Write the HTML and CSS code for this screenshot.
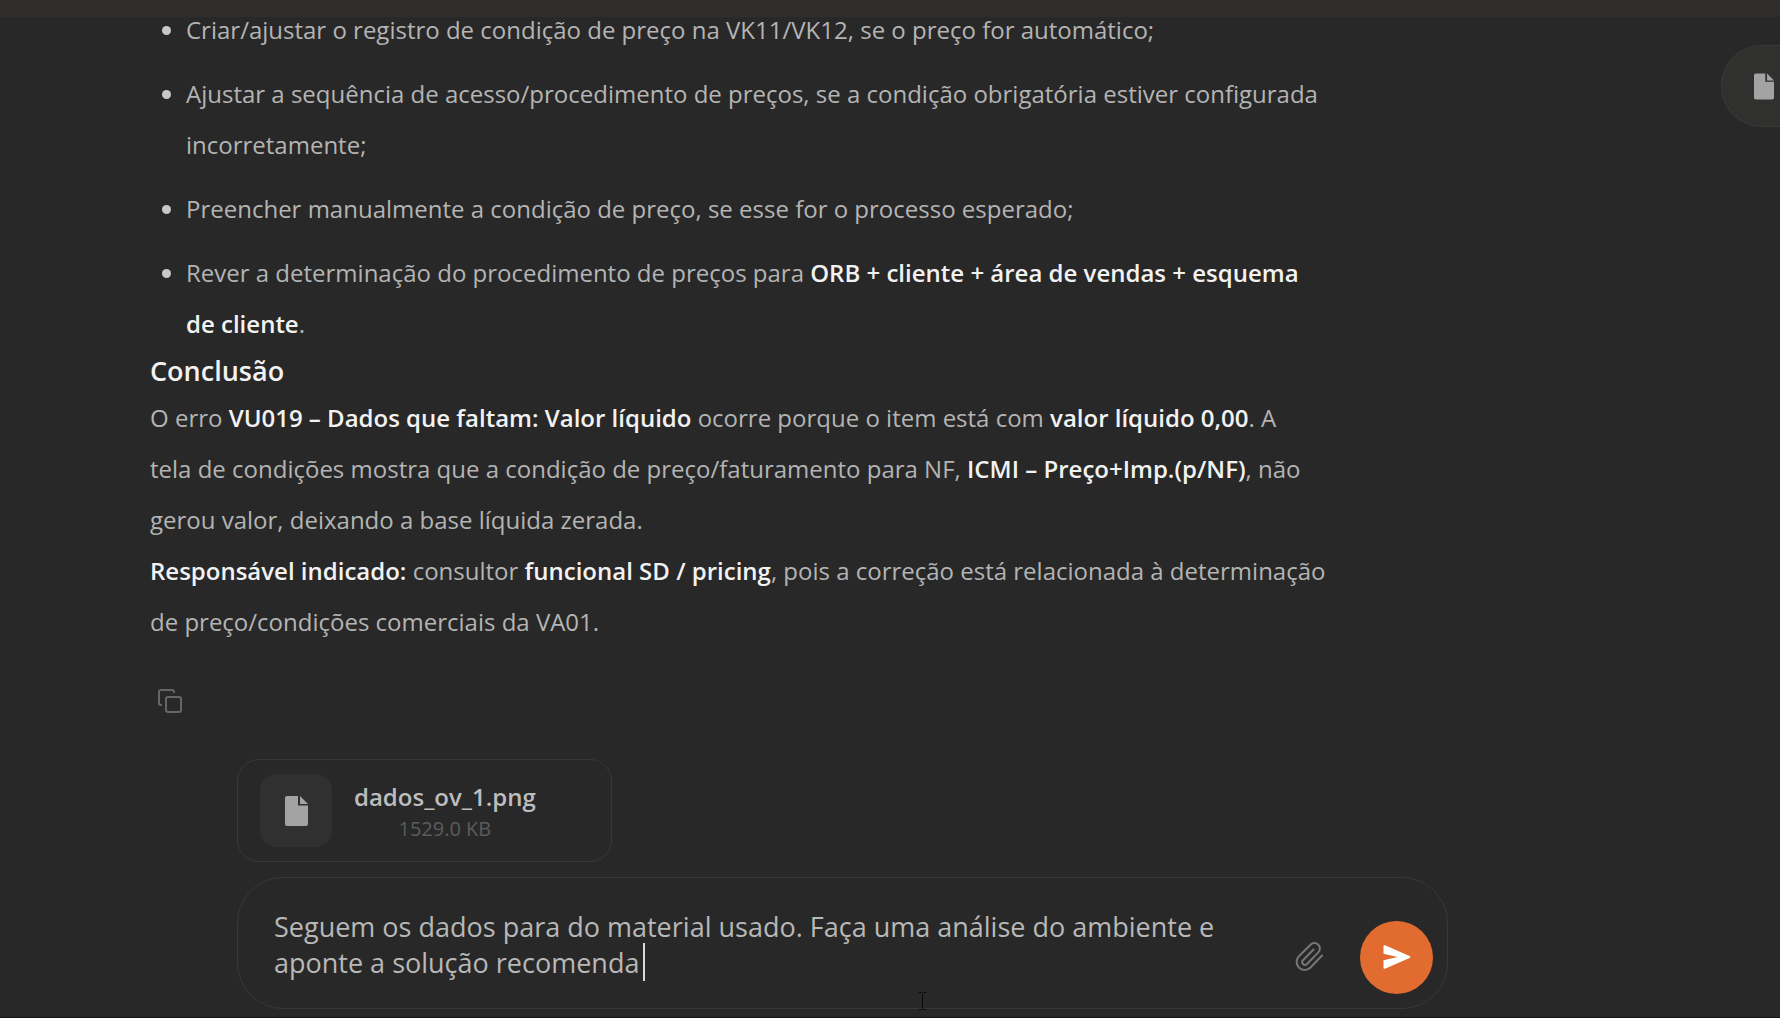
FILE: index.html
```html
<!DOCTYPE html>
<html lang="pt-BR">
<head>
  <meta charset="UTF-8" />
  <meta name="viewport" content="width=device-width, initial-scale=1.0" />
  <title>Chat</title>
  <link rel="stylesheet" href="styles.css">
</head>
<body>
  <header class="topbar"></header>

  <button class="files-btn" aria-label="Arquivos">
    <svg class="doc-icon" viewBox="0 0 23 30"><path d="M2 0H13V9.500H23V28a2 2 0 0 1-2 2H2a2 2 0 0 1-2-2V2a2 2 0 0 1 2-2z"/><path d="M15 0L23 8H15z"/></svg>
  </button>

  <main class="chat">
    <article class="message">
      <ul>
        <li>Criar/ajustar o registro de condição de preço na VK11/VK12, se o preço for automático;</li>
        <li>Ajustar a sequência de acesso/procedimento de preços, se a condição obrigatória estiver configurada incorretamente;</li>
        <li>Preencher manualmente a condição de preço, se esse for o processo esperado;</li>
        <li>Rever a determinação do procedimento de preços para <strong>ORB + cliente + área de vendas + esquema de cliente</strong>.</li>
      </ul>
      <h3>Conclusão</h3>
      <p>O erro <strong>VU019 – Dados que faltam: Valor líquido</strong> ocorre porque o item está com <strong>valor líquido 0,00</strong>. A<br>tela de condições mostra que a condição de preço/faturamento para NF, <strong>ICMI – Preço+Imp.(p/NF)</strong>, não gerou valor, deixando a base líquida zerada.</p>
      <p><strong>Responsável indicado:</strong> consultor <strong>funcional SD / pricing</strong>, pois a correção está relacionada à determinação de preço/condições comerciais da VA01.</p>
      <button class="copy-btn" aria-label="Copiar">
        <svg viewBox="0 0 24 24"><rect x="8" y="8" width="15" height="15" rx="2"/><path d="M4 16H3a2 2 0 0 1-2-2V3a2 2 0 0 1 2-2h11a2 2 0 0 1 2 2v1"/></svg>
      </button>
    </article>

    <form class="composer" onsubmit="return false;">
      <div class="file-card">
        <div class="file-thumb">
          <svg class="doc-icon" viewBox="0 0 23 30"><path d="M2 0H13V9.500H23V28a2 2 0 0 1-2 2H2a2 2 0 0 1-2-2V2a2 2 0 0 1 2-2z"/><path d="M15 0L23 8H15z"/></svg>
        </div>
        <div class="file-info">
          <div class="file-name">dados_ov_1.png</div>
          <div class="file-size">1529.0 KB</div>
        </div>
      </div>
      <div class="input-box">
        <textarea class="prompt" rows="2" aria-label="Mensagem" spellcheck="false">Seguem os dados para do material usado. Faça uma análise do ambiente e aponte a solução recomenda</textarea>
        <span class="caret"></span>
        <button class="attach-btn" type="button" aria-label="Anexar arquivo">
          <svg viewBox="0 0 28 31"><path d="M27 14.500L15.500 26.500a8 8 0 0 1-11.600 0a8 8 0 0 1 0-11.300L15.500 3.700a5.400 5.400 0 0 1 7.800 0a5.400 5.400 0 0 1 0 7.700L12 23a2.700 2.700 0 0 1-4 0a2.700 2.700 0 0 1 0-3.800L18.500 8.500"/></svg>
        </button>
        <button class="send-btn" type="submit" aria-label="Enviar">
          <svg viewBox="0 0 28 24"><path d="M.500 1.200Q.500-.300 2 .300L26.500 10.900Q28.300 12 26.500 13.100L2 23.700Q.500 24.300.500 22.800V15.200L14.500 12L.500 8.800z"/></svg>
        </button>
      </div>
    </form>
  </main>

  <svg class="pointer" viewBox="0 0 9 18"><path d="M1 .500H3.500L4.500 1.500L5.500 .500H8M4.500 1.500V16.500M1 17.500H3.500L4.500 16.500L5.500 17.500H8"/></svg>
</body>
</html>
```
FILE: styles.css
```css
* { box-sizing: border-box; }
body { font-family: "Segoe UI", "Open Sans", "Noto Sans", sans-serif; margin: 0; min-height: 100vh; background: #282828; color: #b4b4b4; border-bottom: 1px solid #161616; position: relative; overflow: hidden; }
button { background: none; border: none; padding: 0; cursor: pointer; display: flex; align-items: center; justify-content: center; }

.topbar { position: absolute; top: 0; left: 0; right: 0; height: 17px; background: #2f2e2c; }
.files-btn { position: absolute; top: 45px; right: 0; width: 59px; height: 82px; padding-left: 26px; background: #30302e; border: 1px solid #393937; border-right: none; border-radius: 41px 0 0 41px; }
.doc-icon { width: 23px; height: 30px; fill: #a3a3a3; }
.files-btn .doc-icon { width: 20px; height: 27px; }

.chat { padding: 4px 332px 8px 150px; }
.message { max-width: 1180px; font-size: 24px; line-height: 51px; }
.message ul { margin: 0; padding-left: 36px; }
.message li { margin-bottom: 13px; }
.message li:last-child { margin-bottom: 0; }
.message li::marker { color: #c8c8c8; }
.message h3 { margin: 0; font-size: 27px; line-height: 43px; font-weight: 600; color: #f2f2f2; }
.message p { margin: 0; }
.message strong { font-weight: 600; color: #f2f2f2; }
.copy-btn { width: 40px; height: 40px; margin-top: 34px; }
.copy-btn svg { width: 24px; height: 24px; fill: none; stroke: #666; stroke-width: 2; }

.composer { margin: 38px 0 0 87px; }
.file-card { display: flex; align-items: center; gap: 22px; width: 375px; height: 103px; padding: 0 22px; border: 1px solid #383838; border-radius: 22px; }
.file-thumb { display: flex; align-items: center; justify-content: center; width: 72px; height: 73px; border-radius: 16px; background: #303030; }
.file-info { padding-top: 4px; text-align: center; }
.file-name { font-size: 24px; line-height: 32px; font-weight: 600; color: #bdbdbd; }
.file-size { font-size: 20px; line-height: 32px; color: #5c5c5c; }

.input-box { position: relative; display: flex; align-items: center; height: 132px; margin-top: 15px; padding: 0 14px 0 36px; border: 1px solid #383838; border-radius: 46px; }
.prompt { flex: 1; height: 72px; margin-top: 4px; padding: 0; border: none; outline: none; resize: none; overflow: hidden; background: transparent; color: #b8b8b8; font-family: inherit; font-size: 27px; line-height: 36px; }
.caret { position: absolute; left: 405px; top: 65px; width: 2px; height: 38px; background: #d8d8d8; }
.attach-btn { margin: 26px 37px 0 40px; }
.attach-btn svg { width: 28px; height: 31px; fill: none; stroke: #777; stroke-width: 2; stroke-linecap: round; }
.send-btn { width: 73px; height: 73px; margin-top: 28px; border-radius: 50%; background: #e26c2f; }
.send-btn svg { width: 28px; height: 24px; fill: #fff; }

.pointer { position: absolute; left: 918px; top: 992px; width: 9px; height: 18px; fill: none; stroke: #080808; }
```
